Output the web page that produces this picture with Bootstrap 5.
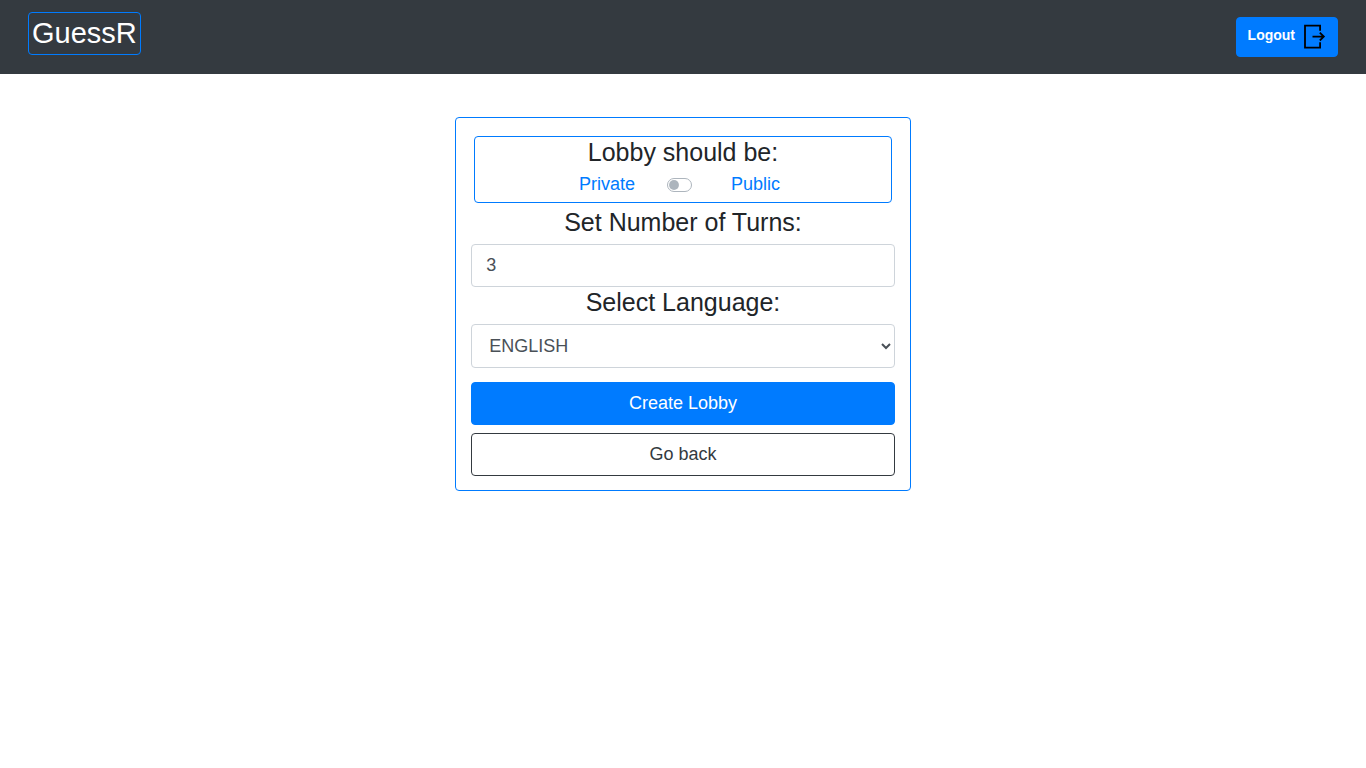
<!DOCTYPE html>
<html lang="en">
<head>
<meta charset="utf-8">
<meta name="viewport" content="width=device-width, initial-scale=1">
<title>GuessR</title>
<link rel="stylesheet" href="https://cdn.jsdelivr.net/npm/bootstrap@5.3.0/dist/css/bootstrap.min.css">
<style>
  body { font-family: "Liberation Sans", Arial, sans-serif; font-size: 18px; color: #212529; --brand-blue: #007bff; }
  .top-bar { background: #343a40; padding: 12px 28px 17px; }
  .site-name { border: 1px solid var(--brand-blue); border-radius: 4px; padding: 0 3px; font-size: 29px; line-height: 41px; color: #fff; }
  .btn { --bs-btn-font-size: 18px; --bs-btn-padding-y: 7px; --bs-btn-border-radius: 4px; line-height: 27px; }
  .btn-primary { --bs-btn-bg: #007bff; --bs-btn-border-color: #007bff; }
  .btn-outline-dark { --bs-btn-color: #343a40; --bs-btn-border-color: #343a40; }
  .btn-logout { --bs-btn-font-size: 14px; --bs-btn-padding-x: 11px; --bs-btn-padding-y: 6px; line-height: 22px; margin-top: 5px; gap: 9px; }
  .lobby { margin-top: 43px; }
  .lobby-box { border: 1px solid var(--brand-blue); border-radius: 4px; padding: 15px 15px 14px; }
  .visibility { border: 1px solid var(--brand-blue); border-radius: 4px; margin: 3px 3px 4px; min-height: 67px; }
  .field-title { display: block; font-size: 25px; line-height: 30px; text-align: center; margin: 0 0 7px; }
  .visibility label { color: var(--brand-blue); line-height: 27px; }
  .visibility .field-title { margin-bottom: 4px; }
  .visibility-options { padding-right: 7px; }
  .switch-slot { margin: 0 39px 0 32px; }
  .form-switch .form-check-input { width: 25px; height: 14px; margin: 5px 0 0; border-color: #adb5bd;
    background-image: url("data:image/svg+xml,%3csvg xmlns='http://www.w3.org/2000/svg' viewBox='-4 -4 8 8'%3e%3ccircle r='3.3' fill='%23adb5bd'/%3e%3c/svg%3e"); }
  .form-control { font-size: 18px; line-height: 27px; color: #495057; border-color: #ced4da; border-radius: 4px; padding: 7px 14px; }
  select.form-control { appearance: auto; height: 44px; padding-left: 13px; margin-bottom: 14px; }
</style>
</head>
<body>
<header class="top-bar d-flex justify-content-between align-items-start">
  <a class="site-name text-decoration-none mb-0" href="#">GuessR</a>
  <button type="button" class="btn btn-primary btn-logout fw-bold d-flex">
    Logout
    <svg width="22" height="26" viewBox="0 0 22 26" fill="none" stroke="#000" stroke-width="1.8" aria-hidden="true">
      <path d="M16.1 6.7V1.6H1v22h15.1v-5.3M8.5 12.6h11.5M15.8 8.7l4 3.9-4 3.9"/>
    </svg>
  </button>
</header>
<main class="lobby row g-0 justify-content-center">
  <form class="lobby-box col-4">
    <div class="visibility" role="group" aria-labelledby="visibility-title">
      <h4 class="field-title fw-normal" id="visibility-title">Lobby should be:</h4>
      <div class="visibility-options d-flex justify-content-center align-items-center">
        <label for="public-switch">Private</label>
        <div class="form-check form-switch switch-slot p-0 d-flex">
          <input class="form-check-input float-none" type="checkbox" role="switch" id="public-switch">
        </div>
        <label for="public-switch">Public</label>
      </div>
    </div>
    <label class="field-title" for="turns">Set Number of Turns:</label>
    <input class="form-control" id="turns" type="text" inputmode="numeric" value="3">
    <label class="field-title" for="language">Select Language:</label>
    <select class="form-control" id="language"><option>ENGLISH</option></select>
    <button type="submit" class="btn btn-primary w-100">Create Lobby</button>
    <button type="button" class="btn btn-outline-dark w-100 mt-2">Go back</button>
  </form>
</main>
<script src="https://cdn.jsdelivr.net/npm/bootstrap@5.3.0/dist/js/bootstrap.bundle.min.js"></script>
</body>
</html>
